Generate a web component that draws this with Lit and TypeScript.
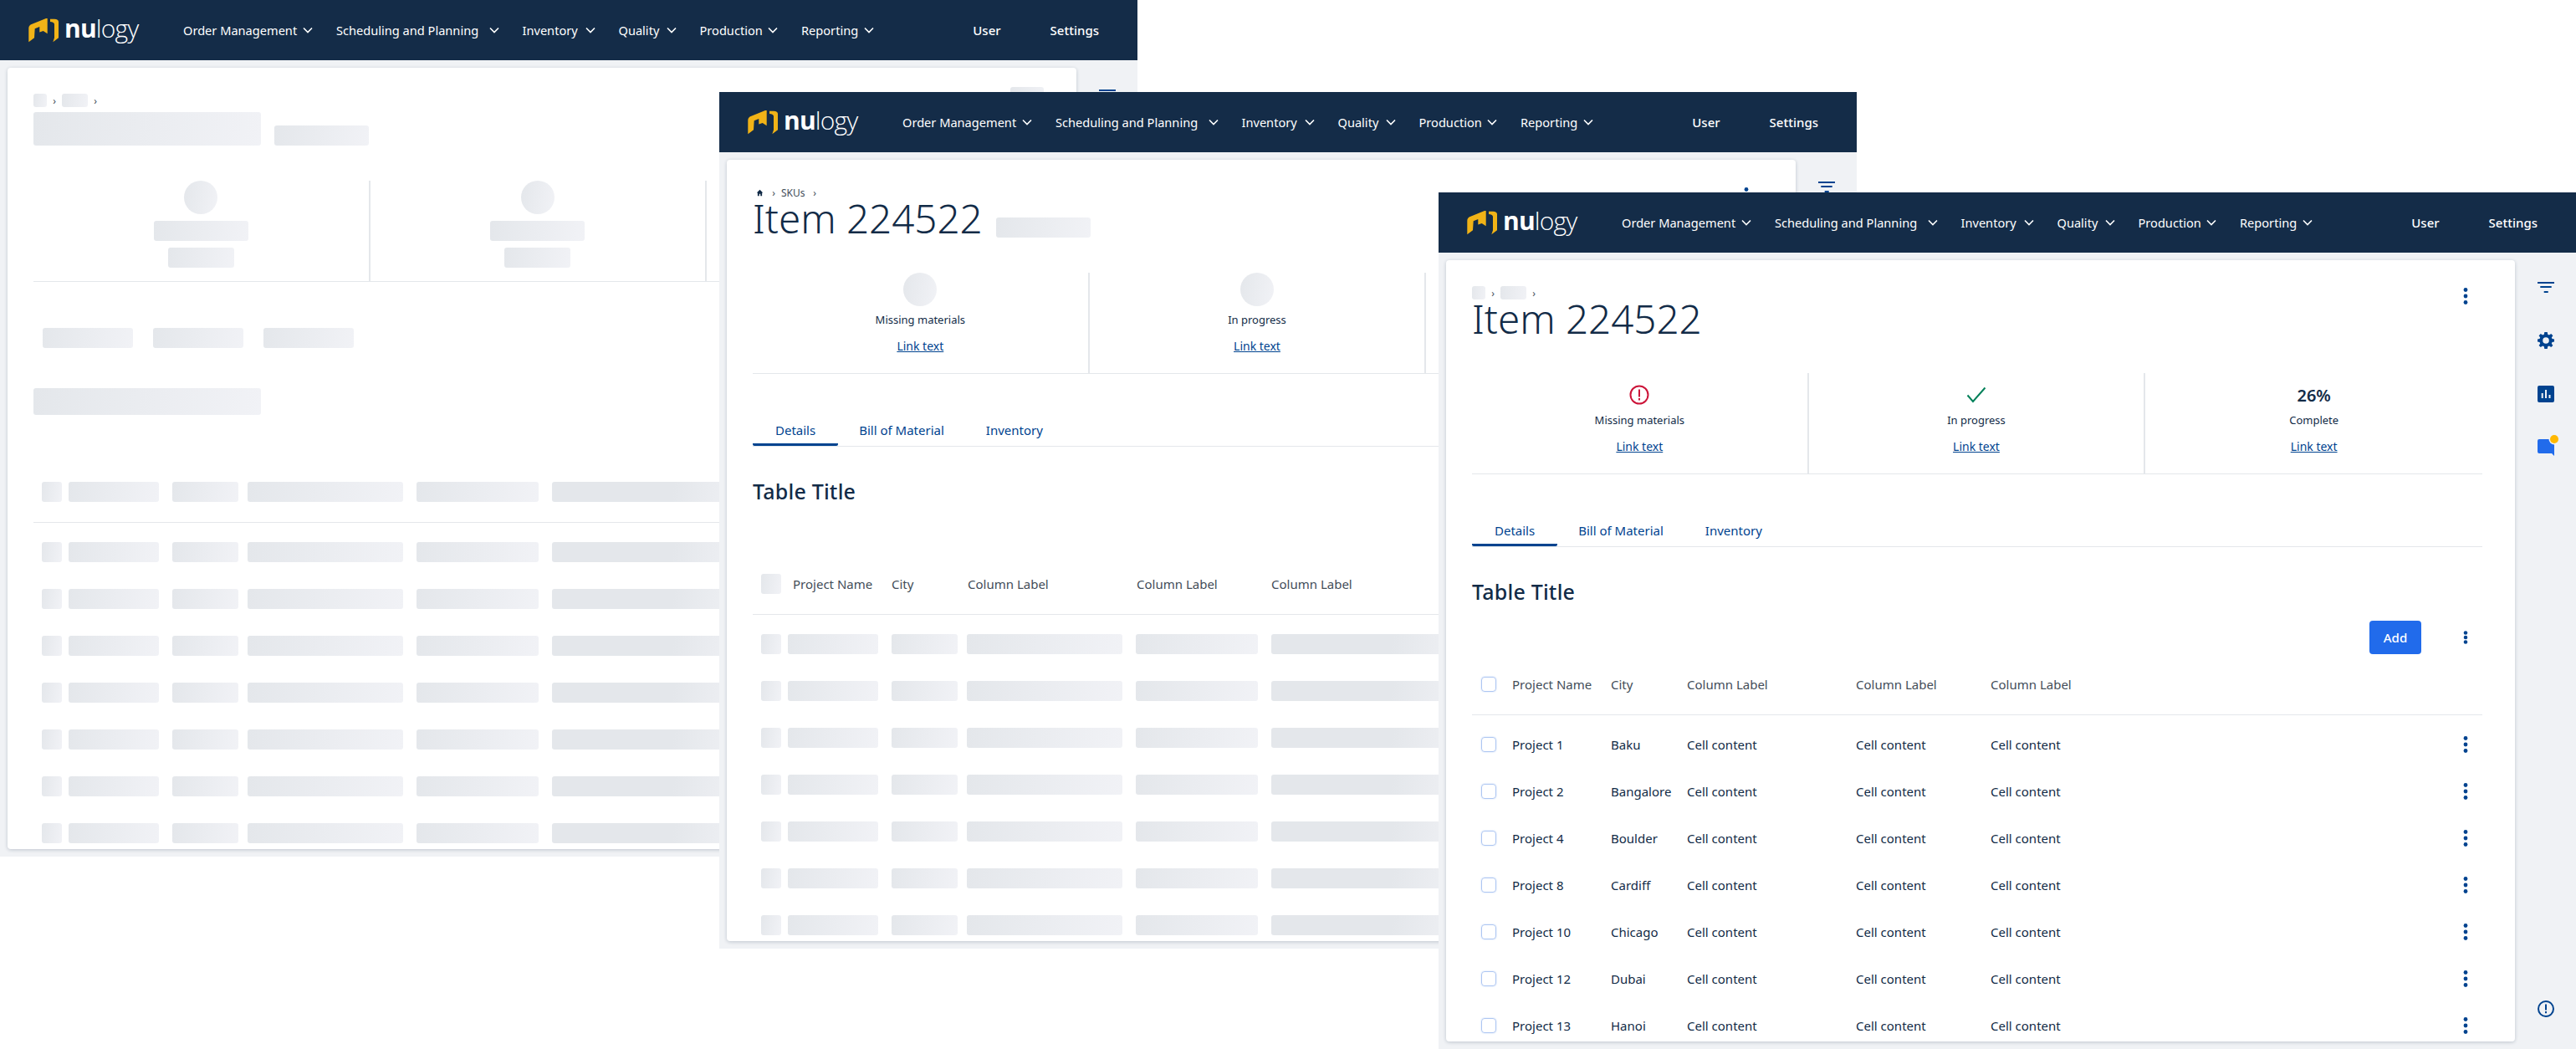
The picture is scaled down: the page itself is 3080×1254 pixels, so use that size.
import { LitElement, html, css, svg, nothing } from 'lit';
import { customElement, property } from 'lit/decorators.js';

// widths come from the reference so the chevrons line up between windows
const NAV = [
  { label: 'Order Management', width: 155 },
  { label: 'Scheduling and Planning', width: 194.5 },
  { label: 'Inventory', width: 87 },
  { label: 'Quality', width: 69 },
  { label: 'Production', width: 93.5 },
  { label: 'Reporting', width: 87 },
];
const COLS = ['Project Name', 'City', 'Column Label', 'Column Label', 'Column Label'];
const ROWS = [
  ['Project 1', 'Baku'],
  ['Project 2', 'Bangalore'],
  ['Project 4', 'Boulder'],
  ['Project 8', 'Cardiff'],
  ['Project 10', 'Chicago'],
  ['Project 12', 'Dubai'],
  ['Project 13', 'Hanoi'],
];
const STATS = ['Missing materials', 'In progress', 'Complete'];

// how far each window has finished loading
type Stage = 'skeleton' | 'partial' | 'loaded';

const icon = (body: unknown, size = 24) => html`
  <svg width=${size} height=${size} viewBox="0 0 24 24" aria-hidden="true">${body}</svg>
`;

const chevron = html`
  <svg class="chev" width="12" height="8" viewBox="0 0 12 8" aria-hidden="true">
    <path d="M1 1.5 6 6.5 11 1.5" fill="none" stroke="currentColor" stroke-width="1.6" />
  </svg>
`;

const kebab = () => icon(svg`
  <circle cx="12" cy="4.5" r="2.4" fill="#00438f" />
  <circle cx="12" cy="12" r="2.4" fill="#00438f" />
  <circle cx="12" cy="19.5" r="2.4" fill="#00438f" />
`);

const smallKebab = icon(svg`
  <circle cx="12" cy="3.6" r="3.4" fill="#00438f" />
  <circle cx="12" cy="12" r="3.4" fill="#00438f" />
  <circle cx="12" cy="20.4" r="3.4" fill="#00438f" />
`, 16);

@customElement('app-window')
export class AppWindow extends LitElement {
  @property({ type: String }) stage: Stage = 'loaded';

  static styles = css`
    :host {
      display: flex;
      flex-direction: column;
      width: 1360px;
      height: 1024px;
      overflow: hidden;
      background: #f0f2f5;
      color: #122b47;
      font-family: 'Noto Sans', sans-serif;
      font-size: 15px;
    }

    .nav {
      flex: none;
      display: flex;
      align-items: center;
      height: 72px;
      padding: 0 46px 0 34px;
      background: #142c48;
      color: #fff;
      font-size: 14.6px;
    }

    .logo {
      display: flex;
      align-items: center;
      gap: 6px;
      width: 185px;
    }

    .wordmark {
      font-family: 'Open Sans', sans-serif;
      font-size: 30px;
      font-weight: 300;
      line-height: 1;
      letter-spacing: -0.8px;
      padding-bottom: 4px;
    }

    .wordmark b {
      font-weight: 700;
    }

    .menu {
      display: flex;
      flex: 1;
      gap: 28px;
    }

    .menu span {
      display: inline-flex;
      align-items: center;
      justify-content: space-between;
      white-space: nowrap;
    }

    .account {
      display: flex;
      gap: 59px;
      font-size: 15px;
      font-weight: 500;
    }

    .body {
      flex: 1;
      display: flex;
      min-height: 0;
      padding: 9px 0 9px 9px;
    }

    .card {
      position: relative;
      flex: 1;
      min-width: 0;
      overflow: hidden;
      padding: 31px 39px 0 31px;
      border-radius: 4px;
      background: #fff;
      box-shadow: 0 1px 4px rgba(18, 43, 71, 0.22);
    }

    .side {
      flex: none;
      display: flex;
      flex-direction: column;
      align-items: center;
      width: 73px;
      padding-top: 20px;
      gap: 40px;
    }

    .side .info {
      margin-top: auto;
      margin-bottom: 27px;
    }

    .sk {
      display: block;
      flex: none;
      border-radius: 3px;
      background: linear-gradient(100deg, #e4e7eb 0%, #f1f2f6 100%);
    }

    .crumbs {
      display: flex;
      align-items: center;
      height: 16px;
      gap: 5px;
      color: #434d59;
      font-size: 12px;
    }

    .crumb-home {
      width: 16px;
      height: 16px;
    }

    .crumb-page {
      width: 31px;
      height: 16px;
    }

    .home {
      display: flex;
      align-items: center;
      justify-content: center;
      width: 16px;
    }

    .skus {
      width: 31px;
    }

    .sep {
      width: 8px;
      text-align: center;
      font-size: 12px;
    }

    .head {
      display: flex;
      align-items: flex-end;
      gap: 16px;
      height: 46px;
    }

    .head-title {
      width: 272px;
      height: 40px;
    }

    .head-tag,
    .stat-title {
      width: 113px;
      height: 24px;
    }

    h1 {
      margin: 0;
      font-size: 47.5px;
      font-weight: 300;
      line-height: 46px;
      white-space: nowrap;
    }

    .top-kebab {
      position: absolute;
      top: 31px;
      right: 47px;
      line-height: 0;
    }

    .kebab-slot {
      width: 40px;
      height: 40px;
      margin: -8px -8px 0 0;
    }

    .stats {
      display: grid;
      grid-template-columns: repeat(3, 1fr);
      height: 120px;
      margin-top: 42px;
      border-bottom: 1px solid #e4e7eb;
    }

    .stat {
      display: flex;
      flex-direction: column;
      align-items: center;
      border-right: 2px solid #e4e7eb;
    }

    .stat:last-child {
      border-right: 0;
    }

    .stat .figure {
      display: flex;
      align-items: center;
      justify-content: center;
      height: 36px;
      padding-top: 8px;
    }

    .pct {
      font-size: 20px;
      font-weight: 600;
    }

    .label {
      height: 24px;
      line-height: 24px;
      font-size: 13px;
    }

    .sk-circle + .label {
      margin-top: 4px;
    }

    .stat a {
      margin-top: 8px;
      line-height: 24px;
      font-size: 14px;
      color: #00438f;
      text-decoration: underline;
    }

    .sk-circle {
      width: 40px;
      height: 40px;
      border-radius: 50%;
    }

    .stat-link {
      width: 79px;
      height: 24px;
    }

    .stat .sk + .sk {
      margin-top: 8px;
    }

    .tabs {
      display: flex;
      height: 48px;
      margin-top: 38px;
      border-bottom: 1px solid #e4e7eb;
      color: #00438f;
    }

    .tabs.bare {
      align-items: flex-start;
      gap: 24px;
      height: 32px;
      margin-top: 55px;
      padding-left: 11px;
      border-bottom: 0;
    }

    .tab-slot {
      width: 108px;
      height: 24px;
    }

    .tab {
      display: flex;
      align-items: center;
      height: 100%;
      padding: 10px 25px 0;
      box-sizing: border-box;
    }

    .tab.on {
      padding: 13px 27px 0;
      border-bottom: 3px solid #00438f;
      border-radius: 0 0 2px 2px;
    }

    .title-row {
      display: flex;
      height: 32px;
      margin-top: 40px;
    }

    .title-slot {
      width: 272px;
      height: 32px;
    }

    h2 {
      margin: -3px 0 0;
      line-height: 32px;
      font-size: 25px;
      font-weight: 500;
      letter-spacing: 0.2px;
    }

    .tools {
      display: flex;
      align-items: center;
      justify-content: flex-end;
      gap: 45px;
      height: 40px;
      margin-top: 16px;
      padding-right: 12px;
    }

    .tools button {
      width: 62px;
      height: 40px;
      padding: 0;
      border: 0;
      border-radius: 4px;
      background: #216beb;
      color: #fff;
      font: 500 15px 'Noto Sans', sans-serif;
    }

    .row {
      display: grid;
      grid-template-columns: 48px 118px 91px 202px 161px 1fr 40px;
      align-items: center;
      height: 56px;
    }

    .row.header {
      height: 72px;
      margin-bottom: 7px;
      border-bottom: 1px solid #e4e7eb;
      color: #434d59;
    }

    .row .box {
      width: 18px;
      height: 18px;
      margin-left: 11px;
      box-sizing: border-box;
      border: 1.5px solid #adc6f2;
      border-radius: 4px;
      box-shadow: 0 0 2px #c7d8f7;
    }

    .row .sk-box {
      width: 24px;
      height: 24px;
      margin-left: 10px;
    }

    .row .kebab {
      justify-self: center;
      line-height: 0;
    }

    .sk-cell {
      height: 24px;
    }

    .c0 {
      width: 108px;
      margin-left: -6px;
    }

    .c1 {
      width: 79px;
    }

    .c2 {
      width: 186px;
      margin-left: -1px;
    }

    .c3 {
      width: 146px;
      margin-left: -1px;
    }

    .c4 {
      width: 240px;
      background: linear-gradient(100deg, #e4e7eb 0%, #e4e7eb 60%, #f1f2f6 100%);
    }

    svg {
      display: block;
      flex: none;
      overflow: visible;
    }
  `;

  private get skeleton() {
    return this.stage === 'skeleton';
  }

  private get loaded() {
    return this.stage === 'loaded';
  }

  private renderLogo() {
    return html`
      <div class="logo">
        <svg width="37" height="31" viewBox="0 0 37 31" aria-hidden="true">
          <path d="M0.3 29.3 L0.3 12.7 Q0.3 9 4.3 7.7 L21 1 L22.7 1 L22.7 19.3 L17.7 16 L13.3 17.6 L13.3 11 L7.7 13.3 L7 24.3 Z" fill="#f1b317" />
          <path d="M26 1.7 L31 1.7 Q36 2 36 5 L36 24.3 L29.3 29.3 L31 24.3 L31 7.7 Q30 5 26 5 Z" fill="#f1b317" />
        </svg>
        <span class="wordmark"><b>nu</b>logy</span>
      </div>
    `;
  }

  private renderSide() {
    return html`
      <div class="side">
        ${icon(svg`<path d="M2 6h20v2H2zM5.3 11h13.4v2H5.3zM9.7 17h5v2h-5z" fill="#00438f" />`)}
        ${icon(svg`<path fill-rule="evenodd" d="M13.7 2h-3.4l-.5 2.8-1.7.7L5.8 4 3.6 6.2l1.6 2.2-.7 1.7L2 10.4v3.2l2.5.4.7 1.7-1.6 2.2L5.8 20l2.3-1.5 1.7.7.5 2.8h3.4l.5-2.8 1.7-.7 2.3 1.5 2.2-2.1-1.6-2.2.7-1.7 2.5-.4v-3.2l-2.5-.3-.7-1.7 1.6-2.2L18.2 4l-2.3 1.5-1.7-.7zM12 8.2a3.8 3.8 0 1 1 0 7.6 3.8 3.8 0 0 1 0-7.6z" fill="#00438f" />`)}
        ${icon(svg`<path fill-rule="evenodd" d="M4 2h16a2 2 0 0 1 2 2v16a2 2 0 0 1-2 2H4a2 2 0 0 1-2-2V4a2 2 0 0 1 2-2zM6.7 11v6h2v-6zM11 7v10h2V7zM15.5 13v4h2v-4z" fill="#00438f" />`)}
        ${icon(svg`
          <path d="M4 2h18v20l-3-3H4a2 2 0 0 1-2-2V4a2 2 0 0 1 2-2z" fill="#216beb" />
          <circle cx="22" cy="2" r="6.5" fill="#f0f2f5" />
          <circle cx="22" cy="2" r="5" fill="#ffb800" />
        `)}
        <div class="info">
          ${icon(svg`
            <circle cx="12" cy="12" r="9" fill="none" stroke="#00438f" stroke-width="2" />
            <path d="M11 6.5h2v7h-2zM11 15h2v2.2h-2z" fill="#00438f" />
          `)}
        </div>
      </div>
    `;
  }

  private renderHead() {
    const partial = this.stage === 'partial';
    return html`
      <div class="crumbs">
        ${partial
          ? html`<span class="home">${icon(svg`<path d="M12 2 2 12h3v10h5v-7h4v7h5V12h3z" fill="#122b47" />`, 9)}</span>`
          : html`<i class="sk crumb-home"></i>`}
        <span class="sep">›</span>
        ${partial ? html`<span class="skus">SKUs</span>` : html`<i class="sk crumb-page"></i>`}
        <span class="sep">›</span>
      </div>
      <div class="head">
        ${this.skeleton ? html`<i class="sk head-title"></i>` : html`<h1>Item 224522</h1>`}
        ${this.loaded ? nothing : html`<i class="sk head-tag"></i>`}
      </div>
      <div class="top-kebab">
        ${this.skeleton ? html`<i class="sk kebab-slot"></i>` : kebab()}
      </div>
    `;
  }

  private renderStats() {
    const figures = [
      icon(svg`
        <circle cx="12" cy="12" r="10.5" fill="none" stroke="#cc1439" stroke-width="2" />
        <path d="M11 5.5h2v9h-2zM11 16h2v2.5h-2z" fill="#cc1439" />
      `),
      icon(svg`<path d="M1.5 12.5 8 20 22.5 3.5" fill="none" stroke="#008059" stroke-width="2" />`),
      html`<span class="pct">26%</span>`,
    ];
    return html`
      <div class="stats">
        ${STATS.map((label, i) => {
          if (this.skeleton) {
            return html`
              <div class="stat">
                <i class="sk sk-circle"></i>
                <i class="sk stat-title"></i>
                <i class="sk stat-link"></i>
              </div>
            `;
          }
          // the third column of the middle window sits under the front window
          if (!this.loaded && i === 2) {
            return html`<div class="stat"></div>`;
          }
          return html`
            <div class="stat">
              ${this.loaded
                ? html`<div class="figure">${figures[i]}</div>`
                : html`<i class="sk sk-circle"></i>`}
              <div class="label">${label}</div>
              <a href="#">Link text</a>
            </div>
          `;
        })}
      </div>
    `;
  }

  private renderTabs() {
    if (this.skeleton) {
      return html`
        <div class="tabs bare">
          ${[0, 1, 2].map(() => html`<i class="sk tab-slot"></i>`)}
        </div>
      `;
    }
    return html`
      <div class="tabs">
        <div class="tab on">Details</div>
        <div class="tab">Bill of Material</div>
        <div class="tab">Inventory</div>
      </div>
    `;
  }

  private renderTable() {
    const cell = (i: number) => html`<i class="sk sk-cell c${i}"></i>`;
    return html`
      <div class="title-row">
        ${this.skeleton ? html`<i class="sk title-slot"></i>` : html`<h2>Table Title</h2>`}
      </div>
      <div class="tools">
        ${this.loaded ? html`<button>Add</button>${smallKebab}` : nothing}
      </div>
      <div class="row header">
        ${this.loaded ? html`<i class="box"></i>` : html`<i class="sk sk-box"></i>`}
        ${COLS.map((c, i) => (this.skeleton ? cell(i) : html`<span>${c}</span>`))}
      </div>
      ${ROWS.map(
        ([name, city]) => html`
          <div class="row">
            ${this.loaded
              ? html`<i class="box"></i><span>${name}</span><span>${city}</span>
                  ${[0, 1, 2].map(() => html`<span>Cell content</span>`)}
                  <span class="kebab">${kebab()}</span>`
              : html`<i class="sk sk-box"></i>${COLS.map((_, i) => cell(i))}`}
          </div>
        `
      )}
    `;
  }

  render() {
    return html`
      <div class="nav">
        ${this.renderLogo()}
        <div class="menu">
          ${NAV.map((n) => html`<span style="width:${n.width}px">${n.label}${chevron}</span>`)}
        </div>
        <div class="account"><span>User</span><span>Settings</span></div>
      </div>
      <div class="body">
        <div class="card">
          ${this.renderHead()}
          ${this.renderStats()}
          ${this.renderTabs()}
          ${this.renderTable()}
        </div>
        ${this.renderSide()}
      </div>
    `;
  }
}

@customElement('app-root')
export class AppRoot extends LitElement {
  static styles = css`
    :host {
      display: block;
      position: relative;
      width: 3080px;
      height: 1254px;
      overflow: hidden;
      background: #fff;
    }

    app-window {
      position: absolute;
    }

    .first {
      left: 0;
      top: 0;
    }

    .second {
      left: 860px;
      top: 110px;
    }

    .third {
      left: 1720px;
      top: 230px;
    }
  `;

  render() {
    return html`
      <app-window class="first" stage="skeleton"></app-window>
      <app-window class="second" stage="partial"></app-window>
      <app-window class="third" stage="loaded"></app-window>
    `;
  }
}
